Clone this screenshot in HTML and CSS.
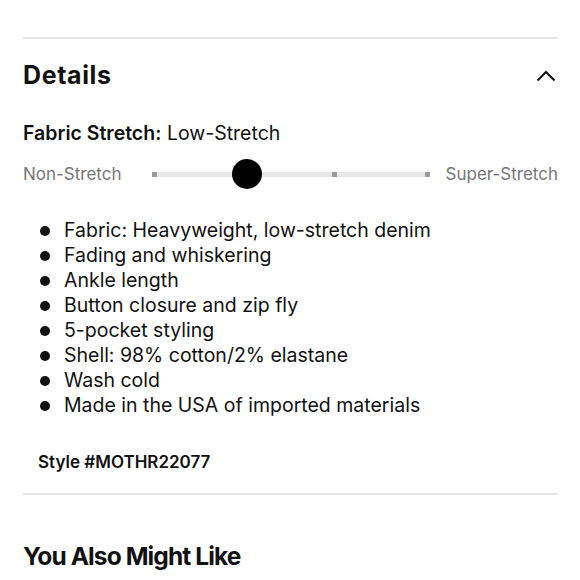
FILE: index.html
```html
<!DOCTYPE html>
<html>
<head>
<meta charset="utf-8">
<link rel="stylesheet" href="styles.css">
</head>
<body>
<div class="page">
  <section class="details">
    <div class="details-head">
      <h2 class="title">Details</h2>
      <svg class="chev" width="20" height="12" viewBox="0 0 20 12"><path d="M1.5 10.5 L10 2 L18.5 10.5" fill="none" stroke="#111" stroke-width="2"/></svg>
    </div>
    <div class="stretch-label"><b>Fabric Stretch:</b> Low-Stretch</div>
    <div class="slider-row">
      <span class="end">Non-Stretch</span>
      <div class="track">
        <span class="tick t1"></span>
        <span class="tick t2"></span>
        <span class="tick t3"></span>
        <span class="knob"></span>
      </div>
      <span class="end">Super-Stretch</span>
    </div>
    <ul class="bullets">
      <li>Fabric: Heavyweight, low-stretch denim</li>
      <li>Fading and whiskering</li>
      <li>Ankle length</li>
      <li>Button closure and zip fly</li>
      <li>5-pocket styling</li>
      <li>Shell: 98% cotton/2% elastane</li>
      <li>Wash cold</li>
      <li>Made in the USA of imported materials</li>
    </ul>
    <div class="style-no">Style #MOTHR22077</div>
  </section>
  <h2 class="title also">You Also Might Like</h2>
</div>
</body>
</html>
```
FILE: styles.css
```css
* { box-sizing: border-box; }
html, body { margin: 0; padding: 0; background: #fff; }
body { font-family: Inter, "Liberation Sans", Arial, sans-serif; color: #111; }
.page { padding: 37px 22px 0 23px; }
.details { border-top: 2px solid #e6e6e6; border-bottom: 2px solid #e6e6e6; }
.details-head { display: flex; justify-content: space-between; align-items: center; margin-top: 20px; height: 32px; }
.title { margin: 0; font-size: 25px; font-weight: 700; letter-spacing: 0.6px; }
.chev { margin-right: 2px; margin-top: 2px; }
.stretch-label { margin-top: 30px; font-size: 19.5px; line-height: 24px; }
.stretch-label b { font-weight: 600; }
.slider-row { display: flex; align-items: center; margin-top: 12px; height: 34px; }
.end { color: #777; font-size: 17px; }
.track { position: relative; flex: 1; height: 5px; background: #e8e8e8; margin: 0 16px 0 30px; }
.tick { position: absolute; top: 0; width: 5px; height: 5px; background: #9a9a9a; }
.t1 { left: 0; }
.t2 { left: 65%; }
.t3 { right: 0; }
.knob { position: absolute; left: 80px; top: -13px; width: 30px; height: 30px; border-radius: 50%; background: #000; }
.bullets { list-style: none; margin: 27px 0 0; padding: 0 0 0 41px; font-size: 19.5px; line-height: 25px; }
.bullets li { position: relative; }
.bullets li::before { content: ""; position: absolute; left: -24px; top: 8px; width: 10px; height: 10px; border-radius: 50%; background: #111; }
.style-no { margin: 34px 0 0 15px; font-size: 17px; font-weight: 600; padding-bottom: 21px; }
.also { margin-top: 46px; font-size: 24.5px; letter-spacing: -0.9px; }
```
